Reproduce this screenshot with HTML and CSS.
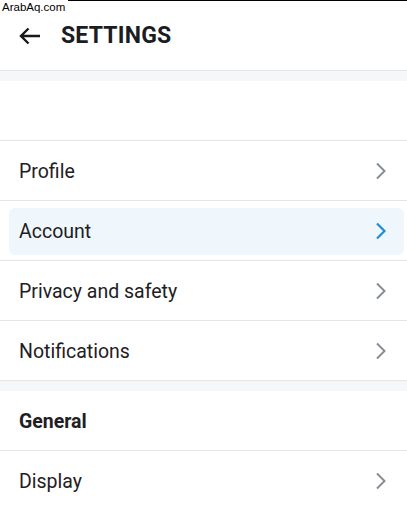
FILE: index.html
```html
<!DOCTYPE html>
<html>
<head>
<meta charset="utf-8">
<link rel="stylesheet" href="styles.css">
</head>
<body>
<div class="watermark">ArabAq.com</div>
<div class="page">
  <header class="header">
    <svg class="back" width="22" height="18" viewBox="0 0 22 18"><path d="M21 9H2.5M9.5 1.5L2 9l7.5 7.5" fill="none" stroke="#1a1a1a" stroke-width="2.4"/></svg>
    <h1 class="title">SETTINGS</h1>
  </header>
  <div class="band"></div>
  <div class="row empty"></div>
  <div class="row"><span class="label">Profile</span><svg class="chev" width="12" height="18" viewBox="0 0 12 18"><path d="M2 1.5l7.5 7.5L2 16.5" fill="none" stroke="#878d94" stroke-width="2"/></svg></div>
  <div class="row rowactive"><div class="active"><span class="label">Account</span><svg class="chev" width="12" height="18" viewBox="0 0 12 18"><path d="M2 1.5l7.5 7.5L2 16.5" fill="none" stroke="#1b8fdb" stroke-width="2.2"/></svg></div></div>
  <div class="row"><span class="label">Privacy and safety</span><svg class="chev" width="12" height="18" viewBox="0 0 12 18"><path d="M2 1.5l7.5 7.5L2 16.5" fill="none" stroke="#878d94" stroke-width="2"/></svg></div>
  <div class="row"><span class="label">Notifications</span><svg class="chev" width="12" height="18" viewBox="0 0 12 18"><path d="M2 1.5l7.5 7.5L2 16.5" fill="none" stroke="#878d94" stroke-width="2"/></svg></div>
  <div class="band"></div>
  <div class="row"><span class="label bold">General</span></div>
  <div class="row"><span class="label">Display</span><svg class="chev" width="12" height="18" viewBox="0 0 12 18"><path d="M2 1.5l7.5 7.5L2 16.5" fill="none" stroke="#878d94" stroke-width="2"/></svg></div>
</div>
</body>
</html>
```
FILE: styles.css
```css
html, body {
  margin: 0;
  padding: 0;
  background: #fff;
}
body {
  font-family: Roboto, "Liberation Sans", sans-serif;
  color: #1c1c1e;
  border-top: 1px solid #000;
  overflow: hidden;
}
.watermark {
  position: absolute;
  top: 0;
  left: 0;
  background: #fff;
  font-family: "Liberation Sans", Arial, sans-serif;
  font-size: 11.5px;
  line-height: 15px;
  padding: 0 3px 0 2px;
  color: #000;
}
.page {
  display: flex;
  flex-direction: column;
}
.header {
  height: 69px;
  display: flex;
  align-items: center;
  padding-left: 19px;
  border-bottom: 1px solid #e3e5e8;
}
.back {
  margin-right: 20px;
  margin-top: 1px;
}
.title {
  margin: 0;
  font-size: 23px;
  font-weight: 700;
  letter-spacing: 0.2px;
  color: #1a1d21;
}
.band {
  height: 10px;
  background: #f5f7f9;
}
.row {
  height: 58px;
  padding: 1px 20px 0 19px;
  border-bottom: 1px solid #e4e6e8;
  display: flex;
  align-items: center;
  justify-content: space-between;
}
.label {
  font-size: 19.5px;
  color: #1e2023;
}
.label.bold {
  font-weight: 700;
}
.row.rowactive {
  height: 59px;
  padding: 0 3px 0 9px;
}
.active {
  flex: 1;
  height: 47px;
  margin-top: 1px;
  background: #eff7fc;
  border-radius: 6px;
  display: flex;
  align-items: center;
  justify-content: space-between;
  padding: 0 17px 0 10px;
}
.chev {
  display: block;
}
```
